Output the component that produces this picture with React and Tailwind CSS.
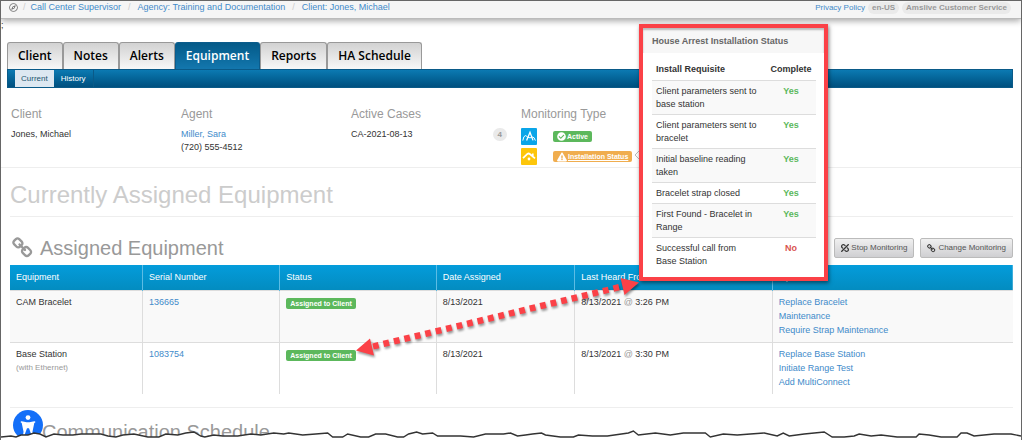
import { FaCheckCircle, FaExclamationTriangle, FaRegCompass, FaUnlink } from 'react-icons/fa';

const tabs = ['Client', 'Notes', 'Alerts', 'Equipment', 'Reports', 'HA Schedule'];

const requisites = [
  { name: 'Client parameters sent to base station', done: true },
  { name: 'Client parameters sent to bracelet', done: true },
  { name: 'Initial baseline reading taken', done: true },
  { name: 'Bracelet strap closed', done: true },
  { name: 'First Found - Bracelet in Range', done: true },
  { name: 'Successful call from\nBase Station', done: false },
];

const equipment = [
  {
    name: 'CAM Bracelet',
    serial: '136665',
    status: 'Assigned to Client',
    assigned: '8/13/2021',
    heard: '3:26 PM',
    options: ['Replace Bracelet', 'Maintenance', 'Require Strap Maintenance'],
  },
  {
    name: 'Base Station',
    note: '(with Ethernet)',
    serial: '1083754',
    status: 'Assigned to Client',
    assigned: '8/13/2021',
    heard: '3:30 PM',
    options: ['Replace Base Station', 'Initiate Range Test', 'Add MultiConnect'],
  },
];

const tearPoints =
  '0,437 10,436 15,437 20,435 27,435 33,433 39,434 45,437 53,434 62,435 72,435 80,434 90,434 100,434 107,436 115,437 122,435 133,434 147,437 158,437 165,434 177,435 185,433 193,432 200,436 204,437 213,435 222,436 237,436 250,434 260,435 273,433 283,434 288,433 302,435 315,434 327,433 332,437 342,437 347,434 360,437 368,437 375,434 385,434 397,437 403,437 408,434 416,432 422,434 432,433 437,436 447,436 460,436 473,437 485,434 503,434 510,433 517,436 525,435 532,434 541,433 545,435 560,437 573,437 578,435 592,436 607,436 628,433 633,431 638,435 655,433 670,435 683,433 705,433 710,437 723,434 737,435 750,434 764,433 777,436 783,433 789,436 804,434 824,432 832,437 844,437 854,436 859,434 871,436 881,435 897,437 916,437 919,434 929,435 941,437 957,437 961,433 967,433 974,436 994,434 1011,434 1021,436';

function ChainIcon({ className }) {
  return (
    <svg viewBox="0 0 1792 1792" fill="currentColor" className={className} aria-hidden="true">
      <path d="M1456 1216q0-40-28-68l-208-208q-28-28-68-28-42 0-72 32 3 3 19 18.5t21.5 21.5 15 19 13 25.5 3.5 27.5q0 40-28 68t-68 28q-15 0-27.5-3.5t-25.5-13-19-15-21.5-21.5-18.5-19q-33 31-33 73 0 40 28 68l206 207q27 27 68 27 40 0 68-26l147-146q28-28 28-67zm-703-705q0-40-28-68l-206-207q-28-28-68-28-39 0-68 27l-147 146q-28 28-28 67 0 40 28 68l208 208q27 27 68 27 42 0 72-31-3-3-19-18.5t-21.5-21.5-15-19-13-25.5-3.5-27.5q0-40 28-68t68-28q15 0 27.5 3.5t25.5 13 19 15 21.5 21.5 18.5 19q33-31 33-73zm895 705q0 120-85 203l-147 146q-83 83-203 83-121 0-204-85l-206-207q-83-83-83-203 0-123 88-209l-88-88q-86 88-208 88-120 0-204-84l-208-208q-84-84-84-204t85-203l147-146q83-83 203-83 121 0 204 85l206 207q83 83 83 203 0 123-88 209l88 88q86-88 208-88 120 0 204 84l208 208q84 84 84 204z" />
    </svg>
  );
}

function ActivityTile() {
  return (
    <svg viewBox="0 0 16 17" className="w-4 h-[17px]" aria-hidden="true">
      <rect width="16" height="17" rx="1" fill="#0aa5e8" />
      <path d="M5.6 12.4 9 4.2l3 8.2" fill="none" stroke="#fff" strokeWidth="1.3" />
      <path d="M1.8 12.6Q2.6 7.6 4.4 7.6q1.4.2 2.4 1.8 2.4 1 4.4-.4 2.2-.2 3.2 3.6" fill="none" stroke="#fff" strokeWidth="1" />
    </svg>
  );
}

function HouseTile() {
  return (
    <svg viewBox="0 0 16 17" className="w-4 h-[17px]" aria-hidden="true">
      <rect width="16" height="17" rx="1" fill="#fdc60b" />
      <path d="M2 10.2 6.4 6Q7.6 5 8.8 6l5.2 4.4M11.8 8.4V5.4" fill="none" stroke="#fff" strokeWidth="1.7" />
      <circle cx="8" cy="11" r="1.4" fill="#fff" />
    </svg>
  );
}

function Header() {
  return (
    <header className="relative flex items-center h-[18px] pl-2 pr-[10px] bg-[#f5f5f5] border-b border-[#bbb] shadow-[0_2px_6px_rgba(0,0,0,0.35)]">
      <nav className="flex items-center gap-[5px] -mt-1 text-[9px] leading-[13px] text-[#ccc]">
        <FaRegCompass className="size-[9px] text-[#777]" />
        <span>/</span>
        <a href="#supervisor" className="mr-[2px] text-[#428bca]">Call Center Supervisor</a>
        <span>/</span>
        <a href="#agency" className="mx-[2px] text-[#428bca]">Agency: Training and Documentation</a>
        <span>/</span>
        <a href="#client" className="ml-[2px] text-[#428bca]">Client: Jones, Michael</a>
      </nav>
      <div className="flex items-center gap-[3px] ml-auto -mt-1 text-[8px] leading-[12px]">
        <a href="#privacy" className="text-[#428bca]">Privacy Policy</a>
        <span className="px-1 rounded-full bg-[#eaeaea] font-bold text-[#999]">en-US</span>
        <span className="px-1 rounded-full bg-[#eaeaea] font-bold text-[#999]">Amslive Customer Service</span>
      </div>
    </header>
  );
}

function Tabs() {
  return (
    <div className="ml-[6px] mr-2 mt-[15px]">
      <nav className="flex font-['Open_Sans',sans-serif] text-[12px] leading-[26px] font-semibold">
        {tabs.map((tab) => (
          <a
            key={tab}
            href={`#${tab}`}
            className={
              tab === 'Equipment'
                ? 'px-[10px] rounded-t-[3px] border border-b-0 border-[#0b5c8c] bg-linear-to-b from-[#045a88] to-[#1377ae] text-white'
                : 'px-[10px] rounded-t-[3px] border border-b-0 border-[#999] bg-linear-to-b from-[#d2d2d2] to-[#f8f8f8] text-black'
            }
          >
            {tab}
          </a>
        ))}
      </nav>
      <nav className="flex h-[19px] pl-[7px] border border-[#0a5a88] bg-linear-to-b from-[#0c7ab2] to-[#00507f] text-[8px] leading-[17px]">
        <a href="#current" className="px-[6px] bg-[#dde8f1] text-[#23556f]">Current</a>
        <a href="#history" className="px-[7px] border-r border-[#0a5a88] text-white">History</a>
      </nav>
    </div>
  );
}

function Summary() {
  return (
    <section className="grid grid-cols-6 mt-[18px] pb-[2px] border-b border-[#eee] text-[9px] leading-[13px]">
      <div className="px-[10px]">
        <h3 className="mb-[6px] text-[12px] leading-4 text-[#999]">Client</h3>
        <p>Jones, Michael</p>
      </div>
      <div className="px-[10px]">
        <h3 className="mb-[6px] text-[12px] leading-4 text-[#999]">Agent</h3>
        <a href="#agent" className="text-[#428bca]">Miller, Sara</a>
        <p>(720) 555-4512</p>
      </div>
      <div className="pl-[10px] pr-1">
        <h3 className="mb-[6px] text-[12px] leading-4 text-[#999]">Active Cases</h3>
        <div className="flex justify-between">
          <span>CA-2021-08-13</span>
          <span className="px-[5px] rounded-full bg-[#eaeaea] text-[8px] font-bold text-[#999]">4</span>
        </div>
      </div>
      <div className="pl-[10px]">
        <h3 className="mb-[6px] text-[12px] leading-4 text-[#999]">Monitoring Type</h3>
        <div className="flex items-center gap-4 mb-[3px]">
          <ActivityTile />
          <span className="flex items-center gap-px h-[11px] px-1 rounded-xs bg-[#5cb85c] text-[7px] font-bold text-white">
            <FaCheckCircle className="size-[9px]" />
            Active
          </span>
        </div>
        <div className="flex items-center gap-4">
          <HouseTile />
          <a
            href="#status"
            className="flex items-center gap-px h-[11px] px-1 rounded-xs bg-[#f0ad4e] text-[7px] font-bold text-white underline whitespace-nowrap"
          >
            <FaExclamationTriangle className="size-[10px]" />
            Installation Status
          </a>
        </div>
      </div>
    </section>
  );
}

function EquipmentTable() {
  return (
    <table className="w-full table-fixed text-left text-[9px] leading-[14px]">
      <thead>
        <tr className="h-[25px] bg-linear-to-b from-[#049cdb] to-[#038cc0] text-white">
          <th className="w-[13.2%] px-[6px] font-normal">Equipment</th>
          <th className="w-[13.7%] px-[6px] border-l border-[#5cbce4] font-normal">Serial Number</th>
          <th className="w-[15.6%] px-[6px] border-l border-[#5cbce4] font-normal">Status</th>
          <th className="w-[13.8%] px-[6px] border-l border-[#5cbce4] font-normal">Date Assigned</th>
          <th className="w-[19.7%] px-[6px] border-l border-[#5cbce4] font-normal">Last Heard From</th>
          <th className="px-[6px] border-l border-[#5cbce4] font-normal">Options</th>
        </tr>
      </thead>
      <tbody>
        {equipment.map((item) => (
          <tr key={item.serial} className="h-[52px] border-t border-[#ddd] align-top odd:bg-[#f9f9f9]">
            <td className="px-[6px] py-1">
              {item.name}
              {item.note && <small className="block text-[8px] text-[#999]">{item.note}</small>}
            </td>
            <td className="px-[6px] py-1 border-l border-[#ddd]">
              <a href="#serial" className="text-[#428bca]">{item.serial}</a>
            </td>
            <td className="px-[6px] py-1 border-l border-[#ddd]">
              <span className="block w-fit mt-[3px] px-1 rounded-xs bg-[#5cb85c] text-[7px] leading-[11px] font-bold text-white">
                {item.status}
              </span>
            </td>
            <td className="px-[6px] py-1 border-l border-[#ddd]">{item.assigned}</td>
            <td className="px-[6px] py-1 border-l border-[#ddd]">
              8/13/2021 <span className="text-[#999]">@</span> {item.heard}
            </td>
            <td className="px-[6px] py-1 border-l border-[#ddd]">
              {item.options.map((option) => (
                <a key={option} href="#option" className="block text-[#428bca]">{option}</a>
              ))}
            </td>
          </tr>
        ))}
      </tbody>
    </table>
  );
}

function StatusPopover() {
  return (
    <>
      <svg viewBox="0 0 5 8" className="absolute left-[633px] top-[150px] w-[5px] h-2" aria-hidden="true">
        <path d="M5 0 1 4l4 4" fill="#fff" stroke="#bbb" />
      </svg>
      <aside className="absolute left-[638px] top-[23px] w-[189px] border-4 border-[#fb4147] bg-white text-[9px] leading-[13px] shadow-[1px_2px_4px_rgba(0,0,0,0.5)]">
        <h4 className="pl-[9px] pt-[7px] pb-[5px] bg-[#f7f7f7] font-bold text-[#666] shadow-[inset_0_2px_2px_rgba(0,0,0,0.25)]">
          House Arrest Installation Status
        </h4>
        <table className="w-[164px] mx-[9px] mt-[10px] mb-[6px]">
          <thead>
            <tr className="text-left">
              <th className="px-1 pb-[4px]">Install Requisite</th>
              <th className="w-[50px] pb-[4px] text-center">Complete</th>
            </tr>
          </thead>
          <tbody>
            {requisites.map((req) => (
              <tr key={req.name} className="border-t border-[#ddd] align-top odd:bg-[#f9f9f9]">
                <td className="pl-1 pr-[6px] pt-1 pb-[3px] whitespace-pre-line">{req.name}</td>
                <td className={req.done ? 'pt-1 text-center font-bold text-[#5cb85c]' : 'pt-1 text-center font-bold text-[#d9534f]'}>
                  {req.done ? 'Yes' : 'No'}
                </td>
              </tr>
            ))}
          </tbody>
        </table>
      </aside>
    </>
  );
}

// dotted double arrow between the status badge and the popover
function Connector() {
  return (
    <svg
      viewBox="0 0 290 80"
      className="absolute left-[351px] top-[277px] w-[290px] h-20 drop-shadow-[1px_2px_1px_rgba(0,0,0,0.4)]"
      aria-hidden="true"
    >
      <path d="M21 68.5 270 8.5" stroke="#fb4147" strokeWidth="6.4" strokeDasharray="5.8 4.95" />
      <path d="M4 72.5 18 60.5l4 17zM287 4.5 268.5 0l4 17z" fill="#fb4147" />
    </svg>
  );
}

export default function App() {
  return (
    <div className="relative mr-[2px] overflow-hidden border-t border-x border-[#666] bg-white font-['Liberation_Sans',Arial,sans-serif] text-[#333]">
      <Header />
      <div className="h-2 text-[9px] leading-[13px]">;</div>
      <Tabs />
      <Summary />

      <main className="ml-[9px] mr-2">
        <h1 className="mt-3 pb-[6px] border-b border-[#eee] text-[24px] leading-[30px] text-[#ccc]">
          Currently Assigned Equipment
        </h1>
        <div className="flex items-center mt-[17px] mb-[3px]">
          <ChainIcon className="size-[22px] ml-[2px] mr-[6px] text-[#999]" />
          <h2 className="text-[20px] leading-[28px] text-[#999]">Assigned Equipment</h2>
          <div className="flex gap-[6px] ml-auto text-[8px] leading-[18px] text-[#555]">
            <button type="button" className="flex items-center gap-[2px] px-[6px] rounded-xs border border-[#bbb] bg-linear-to-b from-[#f0f0f0] to-[#cfcfd2]">
              <FaUnlink className="size-2 -scale-x-100 text-[#333]" />
              Stop Monitoring
            </button>
            <button type="button" className="flex items-center gap-[2px] px-[6px] rounded-xs border border-[#bbb] bg-linear-to-b from-[#f0f0f0] to-[#cfcfd2]">
              <ChainIcon className="size-[9px] text-[#333]" />
              Change Monitoring
            </button>
          </div>
        </div>
        <EquipmentTable />
        <section className="mt-[13px] pt-4 pl-8 border-t border-[#eee]">
          <h2 className="text-[20px] leading-4 text-[#999]">Communication Schedule</h2>
        </section>
      </main>

      <button type="button" aria-label="Accessibility" className="absolute left-3 top-[409px] size-[30px] rounded-full bg-[#146ff8] text-white">
        <svg viewBox="0 0 30 30" className="size-[30px]" aria-hidden="true">
          <circle cx="15" cy="7.6" r="2.4" fill="currentColor" />
          <path
            d="M8.5 12 13.4 13v4.4L11 24M21.5 12l-4.9 1v4.4L19 24M13.4 13h3.2v4.4h-3.2z"
            fill="currentColor"
            stroke="currentColor"
            strokeWidth="1.7"
            strokeLinecap="round"
            strokeLinejoin="round"
          />
        </svg>
      </button>

      <svg viewBox="0 429 1021 11" preserveAspectRatio="none" className="absolute left-0 bottom-0 w-full h-[11px]" aria-hidden="true">
        <polygon points={`${tearPoints} 1021,441 0,441`} fill="#fff" />
        <polyline points={tearPoints} fill="none" stroke="#333" strokeWidth="1.4" />
      </svg>

      <StatusPopover />
      <Connector />
    </div>
  );
}
